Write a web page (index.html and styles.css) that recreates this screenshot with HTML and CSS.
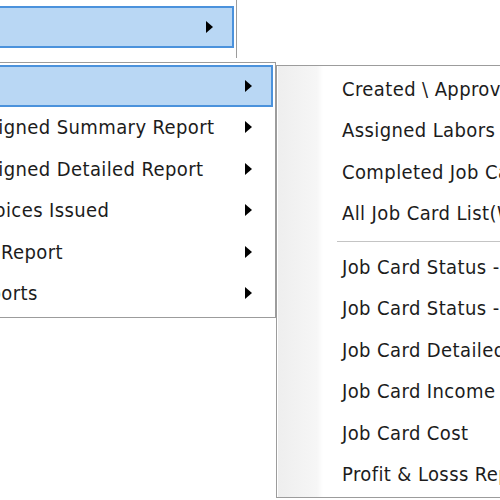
FILE: index.html
```html
<!DOCTYPE html>
<html>
<head>
<meta charset="utf-8">
<link rel="stylesheet" href="styles.css">
</head>
<body>
<div class="screen">
  <div class="menu menu-main">
    <div class="item"><span class="label">Masters</span></div>
    <div class="item active"><span class="label">Reports</span><span class="arrow"></span></div>
    <div class="item"><span class="label">Tools</span></div>
  </div>

  <div class="menu menu-sub">
    <div class="item active"><span class="label">Job</span><span class="arrow"></span></div>
    <div class="item"><span class="label">Assigned Summary Report</span><span class="arrow"></span></div>
    <div class="item"><span class="label">Assigned Detailed Report</span><span class="arrow"></span></div>
    <div class="item"><span class="label">Invoices Issued</span><span class="arrow"></span></div>
    <div class="item"><span class="label">Job Report</span><span class="arrow"></span></div>
    <div class="item"><span class="label">Reports</span><span class="arrow"></span></div>
  </div>

  <div class="menu menu-leaf">
    <div class="item"><span class="label">Created \ Approved Job Cards</span></div>
    <div class="item"><span class="label">Assigned Labors In Job Cards</span></div>
    <div class="item"><span class="label">Completed Job Cards</span></div>
    <div class="item"><span class="label">All Job Card List(With Status)</span></div>
    <div class="sep"></div>
    <div class="item"><span class="label">Job Card Status - Summary</span></div>
    <div class="item"><span class="label">Job Card Status - Detailed</span></div>
    <div class="item"><span class="label">Job Card Detailed Report</span></div>
    <div class="item"><span class="label">Job Card Income Report</span></div>
    <div class="item"><span class="label">Job Card Cost</span></div>
    <div class="item"><span class="label">Profit &amp; Losss Report</span></div>
  </div>
</div>
</body>
</html>
```

FILE: styles.css
```css
html, body {
  margin: 0;
  padding: 0;
  background: #ffffff;
}

.screen {
  position: relative;
  width: 500px;
  height: 500px;
  overflow: hidden;
  background: #ffffff;
  font-family: "DejaVu Sans Condensed", "DejaVu Sans", sans-serif;
  font-size: 20px;
  letter-spacing: 0.4px;
  color: #1c1c1c;
}

.menu {
  position: absolute;
  box-sizing: border-box;
  background: #ffffff;
  border: 1px solid #9c9c9c;
  padding: 2px;
  display: flex;
  flex-direction: column;
}

.item {
  box-sizing: border-box;
  height: 41.5px;
  flex: none;
  display: flex;
  align-items: center;
  border: 2px solid transparent;
  padding-left: 61px;
  padding-right: 19px;
  white-space: nowrap;
}

.item.active {
  background: #b9d7f4;
  border-color: #4b92dc;
}

.label {
  flex: 1;
  line-height: 1;
}

.arrow {
  width: 0;
  height: 0;
  border-left: 7px solid #000;
  border-top: 6.5px solid transparent;
  border-bottom: 6.5px solid transparent;
}

.menu-main {
  left: -140px;
  top: -38.5px;
  width: 377px;
  height: 180px;
}

.menu-sub {
  left: -100px;
  top: 62px;
  width: 376px;
  padding-bottom: 3px;
  box-shadow: 0 -4px 0 #ffffff;
}

.menu-leaf {
  left: 276px;
  top: 65px;
  width: 320px;
  height: 433px;
  background: linear-gradient(90deg, #ffffff 0, #ffffff 1px, #eeeeee 1px, #f6f6f6 40px, #ffffff 46px);
}

.sep {
  flex: none;
  margin: 7px 0 4px 58px;
  border-top: 1px solid #c4c4c4;
}
```
